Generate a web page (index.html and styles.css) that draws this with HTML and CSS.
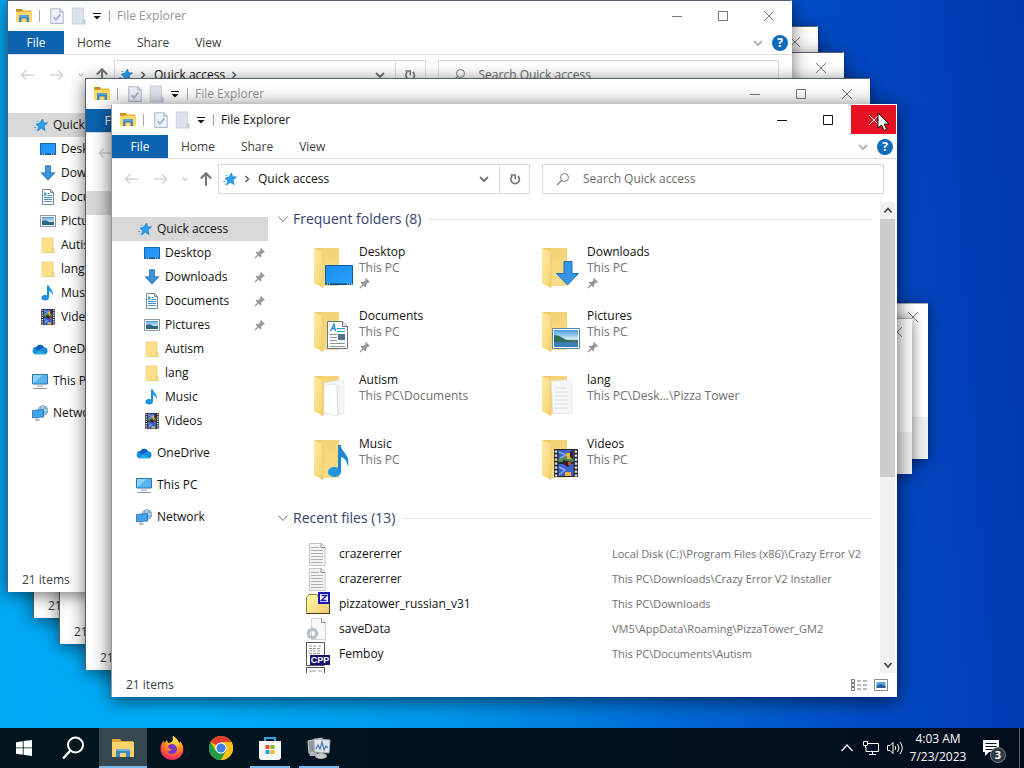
FILE: index.html
```html
<!DOCTYPE html>
<html lang="en">
<head>
<meta charset="utf-8">
<title>File Explorer</title>
<link rel="stylesheet" href="styles.css">
</head>
<body>
<svg class="defs" aria-hidden="true">
  <defs>
    <linearGradient id="gFold" x1="0" x2="1" y1="0" y2="1"><stop offset="0" stop-color="#ffe9a6"/><stop offset="1" stop-color="#f7d56c"/></linearGradient>
    <linearGradient id="gBack" x1="0" x2="0" y1="0" y2="1"><stop offset="0" stop-color="#f5d478"/><stop offset="1" stop-color="#f8dc8c"/></linearGradient>
    <linearGradient id="gBlue" x1="0" x2="1" y1="0" y2="1"><stop offset="0" stop-color="#1a8cf0"/><stop offset="1" stop-color="#2ba2ff"/></linearGradient>
    <linearGradient id="gSky" x1="0" x2="0" y1="0" y2="1"><stop offset="0" stop-color="#4a9ce0"/><stop offset=".55" stop-color="#d5ecf7"/><stop offset=".6" stop-color="#4e7d68"/><stop offset="1" stop-color="#27548a"/></linearGradient>
    <radialGradient id="gFox" cx=".6" cy=".2" r=".9"><stop offset="0" stop-color="#fff04a"/><stop offset=".4" stop-color="#ff9a1f"/><stop offset=".8" stop-color="#ff3750"/><stop offset="1" stop-color="#e0228a"/></radialGradient>
    <linearGradient id="gZip" x1="0" x2="1" y1="0" y2="1"><stop offset="0" stop-color="#ffffa8"/><stop offset="1" stop-color="#f2c46c"/></linearGradient>
    <symbol id="explorer" viewBox="0 0 16 16"><path d="M0 1h6l1 1.500h8.500V14H0z" fill="#e9b93c"/><path d="M0 1h6l1 1.500H6l-1 1H0z" fill="#c98f1c"/><path d="M0 4h16v10H0z" fill="#ffd968"/><path d="M3 7h10v7h-2.500v-3.500h-5V14H3z" fill="#3f88c5"/><path d="M3 7h10v2H3z" fill="#5aa3d8"/></symbol>
    <symbol id="props" viewBox="0 0 16 16"><path d="M2.500 1.500h8l3 3v10h-11z" fill="#eef1f8" stroke="#b3bccd"/><path d="M10.500 1.500v3h3" fill="none" stroke="#b3bccd"/><path d="m5 9 2 2.500L11 6.500" fill="none" stroke="#a9b4d2" stroke-width="1.700"/></symbol>
    <symbol id="newf" viewBox="0 0 16 16"><path d="M2 1h10v10l1.500.5V15H2z" fill="#dde2ec" stroke="#cdd4e2"/><path d="M11 11h2.500v4H11z" fill="#c7cfdd"/></symbol>
    <symbol id="star" viewBox="0 0 16 16"><path d="m9.500 2 1 3.800 4 .2-3.500 2.800 1 4.700-3.700-2.300L4.500 14l1.500-4.300L3 7.300 6.800 6.200z" fill="#2d9fee" stroke="#1c83d6" stroke-width=".8"/><path d="M1 10.500h2.500M2 13h1.500M3.500 4.500h2" stroke="#64b5ee"/></symbol>
    <symbol id="desktop" viewBox="0 0 16 16"><path d="M.5 2.500h15v11H.5z" fill="url(#gBlue)" stroke="#1268b0"/><path d="M1 13h14" stroke="#0b4a86"/><path d="M2 13h1m1 0h1m6 0h1m1 0h1" stroke="#fff"/></symbol>
    <symbol id="down" viewBox="0 0 16 16"><path d="M5.500.8h5v7h4.300L8 15.200 1.200 7.800h4.300z" fill="#3a93dd" stroke="#1d6fb8" stroke-width=".8"/></symbol>
    <symbol id="doc" viewBox="0 0 16 16"><path d="M2.500.5h8l3 3v12h-11z" fill="#fff" stroke="#7c8794"/><path d="M10.500.5v3h3" fill="none" stroke="#7c8794"/><path d="M7.500 4.500h2M7.500 6.500h4.500M4 8.500h8M4 10.500h8M4 12.500h8" stroke="#3d8fc4"/><path d="m4 6.800 1-3.200 1 3.200" fill="none" stroke="#1f83c4"/></symbol>
    <symbol id="pic" viewBox="0 0 16 16"><path d="M.5 2.500h15v11H.5z" fill="#fff" stroke="#8b98a6"/><path d="M2 4h12v8H2z" fill="url(#gSky)"/><path d="M2 8q4-2 7 1t5 1v2H2z" fill="#2e6687"/></symbol>
    <symbol id="folder" viewBox="0 0 16 16"><path d="M2 1h11v9.500l1 .5v4.500H2z" fill="#ffe08a" stroke="#e8c35c" stroke-width=".6"/><path d="M12 11h2v4.500h-2z" fill="#f3cf6c"/></symbol>
    <symbol id="note" viewBox="0 0 16 16"><ellipse cx="5.200" cy="12.700" rx="3.700" ry="2.700" fill="#1c93dc"/><path d="M7 .5h2c.3 3.500 5 4.500 3.700 10C12.300 7.500 10.500 6.500 9 6v6.500H7z" fill="#1c93dc"/></symbol>
    <symbol id="film" viewBox="0 0 24 28"><path d="M0 0h24v28H0z" fill="#26262c"/><path d="M2 1.500v26M22 1.500v26" stroke="#e8e8e8" stroke-width="2.400" stroke-dasharray="2.200 1.800"/><path d="M4.500 1h15v12h-15zM4.500 15h15v12h-15z" fill="#3b62cf"/><path d="M4.500 9l6-3 3 4 6-2v5h-15z" fill="#4d8a52"/><path d="M5 3l7 3-6 3M5 18l6 3-6 5" stroke="#87a8ed" stroke-width="1.500" fill="none"/><path d="M12 4h5v6h-4zM11 23h6v4h-6z" fill="#e9b43b"/><path d="m9 11 9 2-4 5-5-3zM16 3l3-2v9l-3-2z" fill="#3a1d24"/><path d="M14 13h3v3h-3z" fill="#c94a32"/></symbol>
    <symbol id="cloud" viewBox="0 0 16 16"><path d="M4.500 6A4.200 4.200 0 0 1 12 6.200a3.600 3.600 0 0 1 .8 7.100H3.500A3.700 3.700 0 0 1 4.500 6z" fill="#1490df"/><path d="M4.500 6A4.200 4.200 0 0 1 12 6.200L6.500 9.500 2 7.200z" fill="#0f5fb4"/><path d="m6.500 9.500 7.500 3.500-1.200.3H3.500z" fill="#28a8ea"/></symbol>
    <symbol id="pc" viewBox="0 0 16 16"><path d="M.5 1.500h15v9.500H.5z" fill="#57b5ef" stroke="#2c78ae"/><path d="M1 10.500V2h10z" fill="#8fd2f8"/><path d="M5 13h6M1 15.500h14" stroke="#8d98a2"/></symbol>
    <symbol id="net" viewBox="0 0 16 16"><circle cx="11" cy="5.500" r="4.800" fill="#86b9d8" stroke="#5d8fae" stroke-width=".7"/><path d="M7 4q4 2 8 1M10.500 1q-2 5 2 9" stroke="#d5edf8" fill="none"/><path d="m.5 5.500 11-1v7.500l-11 .8z" fill="#3ea5e8" stroke="#276fa8" stroke-width=".8"/><path d="M5 13v1.500M3 15h5" stroke="#7d8b96"/></symbol>
    <symbol id="pin" viewBox="0 0 12 12"><path d="m7 1 4 4-1 .8-.8-.2L7 7.800l.2 2-.9.8L1.500 5.600l.9-.8 2 .2L6.500 3 6.200 2z" fill="#95999e"/><path d="M4.500 7.500 1 11" stroke="#95999e" stroke-width="1.200"/></symbol>
    <symbol id="big" viewBox="0 0 48 48"><path d="M8 4h24v38H14z" fill="url(#gBack)"/><path d="M7 4l9 5v34.500L7 39.500z" fill="url(#gFold)"/><path d="M7 4h9v1.500l-7-.3z" fill="#ecc763"/><path d="M14 38v5l2 .5V9" fill="none" stroke="#e6c268" stroke-width=".7"/></symbol>
    <symbol id="x" viewBox="0 0 12 12"><path d="m1 1 10 10M11 1 1 11" fill="none" stroke="currentColor"/></symbol>
    <symbol id="min" viewBox="0 0 12 12"><path d="M1 6.500h10" stroke="currentColor"/></symbol>
    <symbol id="max" viewBox="0 0 12 12"><path d="M1.500 1.500h9v9h-9z" fill="none" stroke="currentColor"/></symbol>
    <symbol id="vee" viewBox="0 0 12 12"><path d="m1.500 3.500 4.500 5 4.500-5" fill="none" stroke="currentColor"/></symbol>
    <symbol id="chev" viewBox="0 0 12 12"><path d="m2 4 4 4 4-4" fill="none" stroke="currentColor" stroke-width="2"/></symbol>
    <symbol id="crumb" viewBox="0 0 8 8"><path d="m2.500 1 3 3-3 3" fill="none" stroke="currentColor" stroke-width="1.400"/></symbol>
    <symbol id="more" viewBox="0 0 8 8"><path d="M0 1.500h8" stroke="currentColor"/><path d="M.5 4h7L4 7.500z" fill="currentColor"/></symbol>
    <symbol id="left" viewBox="0 0 14 14"><path d="M13 7H2M6 3 2 7l4 4" fill="none" stroke="currentColor" stroke-width="1.300"/></symbol>
    <symbol id="right" viewBox="0 0 14 14"><path d="M1 7h11M8 3l4 4-4 4" fill="none" stroke="currentColor" stroke-width="1.300"/></symbol>
    <symbol id="small" viewBox="0 0 14 14"><path d="m5 6 2 2 2-2" fill="none" stroke="currentColor" stroke-width="1.300"/></symbol>
    <symbol id="up" viewBox="0 0 14 14"><path d="M7 13V2M2.500 6.500 7 2l4.500 4.500" fill="none" stroke="currentColor" stroke-width="1.800"/></symbol>
    <symbol id="refresh" viewBox="0 0 14 14"><path d="M9.800 4A4.300 4.300 0 1 1 4.200 4.200" fill="none" stroke="currentColor" stroke-width="1.700"/><path d="M2.500 3h4.700v4.200" fill="none" stroke="currentColor" stroke-width="1.500"/></symbol>
    <symbol id="lens" viewBox="0 0 14 14"><circle cx="8.500" cy="5.500" r="4" fill="none" stroke="currentColor"/><path d="M5.700 8.300 1 13" stroke="currentColor" stroke-width="1.200"/></symbol>
    <symbol id="txt" viewBox="0 0 24 24"><path d="M3.500 1.500h12l3.500 3.500v18.500H3.500z" fill="#f4f4f4" stroke="#c4c4c4"/><path d="M15 1.500v4h4" fill="none" stroke="#8d8d8d"/><path d="M5 5.500h8M5 8.500h12M5 11.500h12M5 14.500h12M5 17.500h12M5 20.500h12" stroke="#adadad"/></symbol>
  </defs>
</svg>

<div class="desktop">
  <section class="window w2" aria-label="File Explorer">
    <header class="titlebar"><div class="controls"><button aria-label="Close"><svg class="i12"><use href="#x"/></svg></button></div></header>
    <div class="body"></div>
    <footer class="status"><span>21 items</span></footer>
  </section>
  <section class="window w3" aria-label="File Explorer">
    <header class="titlebar"><div class="controls"><button aria-label="Close"><svg class="i12"><use href="#x"/></svg></button></div></header>
    <div class="body"></div>
    <footer class="status"><span>21 items</span></footer>
  </section>

  <section class="window w1" aria-label="File Explorer">
    <header class="titlebar">
      <svg class="app"><use href="#explorer"/></svg><i class="sep"></i>
      <button class="quick" aria-label="Properties"><svg class="i18"><use href="#props"/></svg></button>
      <button class="quick" aria-label="New folder"><svg class="i18"><use href="#newf"/></svg></button>
      <button class="more" aria-label="Customize toolbar"><svg><use href="#more"/></svg></button>
      <i class="sep"></i><span class="title">File Explorer</span>
      <div class="controls">
        <button aria-label="Minimize"><svg class="i12"><use href="#min"/></svg></button>
        <button aria-label="Maximize"><svg class="i12"><use href="#max"/></svg></button>
        <button aria-label="Close"><svg class="i12"><use href="#x"/></svg></button>
      </div>
    </header>
    <nav class="tabs">
      <button class="file">File</button><button>Home</button><button>Share</button><button>View</button>
      <button class="ribbon" aria-label="Expand the ribbon"><svg class="i12"><use href="#chev"/></svg></button>
      <button class="help" aria-label="Help">?</button>
    </nav>
    <div class="navrow">
      <button class="off" aria-label="Back"><svg><use href="#left"/></svg></button>
      <button class="off" aria-label="Forward"><svg><use href="#right"/></svg></button>
      <button class="off tiny" aria-label="Recent locations"><svg><use href="#small"/></svg></button>
      <button class="up" aria-label="Up"><svg><use href="#up"/></svg></button>
      <div class="address">
        <svg class="i16"><use href="#star"/></svg><svg class="crumb"><use href="#crumb"/></svg>
        <span>Quick access</span><svg class="crumb"><use href="#crumb"/></svg>
        <button class="drop" aria-label="Previous locations"><svg class="i12"><use href="#chev"/></svg></button>
        <button class="refresh" aria-label="Refresh"><svg><use href="#refresh"/></svg></button>
      </div>
      <label class="search"><svg><use href="#lens"/></svg><input type="search" placeholder="Search Quick access" aria-label="Search Quick access"></label>
    </div>
    <div class="body">
      <aside class="side">
        <a href="#qa" class="root on"><svg class="i16"><use href="#star"/></svg>Quick access</a>
        <a href="#d"><svg class="i16"><use href="#desktop"/></svg>Desktop</a>
        <a href="#d"><svg class="i16"><use href="#down"/></svg>Downloads</a>
        <a href="#d"><svg class="i16"><use href="#doc"/></svg>Documents</a>
        <a href="#d"><svg class="i16"><use href="#pic"/></svg>Pictures</a>
        <a href="#d"><svg class="i16"><use href="#folder"/></svg>Autism</a>
        <a href="#d"><svg class="i16"><use href="#folder"/></svg>lang</a>
        <a href="#d"><svg class="i16"><use href="#note"/></svg>Music</a>
        <a href="#d"><svg class="i16"><use href="#film"/></svg>Videos</a>
        <a href="#d" class="root gap"><svg class="i16"><use href="#cloud"/></svg>OneDrive</a>
        <a href="#d" class="root gap"><svg class="i16"><use href="#pc"/></svg>This PC</a>
        <a href="#d" class="root gap"><svg class="i16"><use href="#net"/></svg>Network</a>
      </aside>
    </div>
    <footer class="status"><span>21 items</span></footer>
  </section>

  <section class="window w4" aria-label="File Explorer">
    <header class="titlebar">
      <svg class="app"><use href="#explorer"/></svg><i class="sep"></i>
      <button class="quick" aria-label="Properties"><svg class="i18"><use href="#props"/></svg></button>
      <button class="quick" aria-label="New folder"><svg class="i18"><use href="#newf"/></svg></button>
      <button class="more" aria-label="Customize toolbar"><svg><use href="#more"/></svg></button>
      <i class="sep"></i><span class="title">File Explorer</span>
      <div class="controls">
        <button aria-label="Minimize"><svg class="i12"><use href="#min"/></svg></button>
        <button aria-label="Maximize"><svg class="i12"><use href="#max"/></svg></button>
        <button aria-label="Close"><svg class="i12"><use href="#x"/></svg></button>
      </div>
    </header>
    <nav class="tabs"><button class="file">File</button></nav>
    <div class="navrow"><button class="off" aria-label="Back"><svg><use href="#left"/></svg></button></div>
    <div class="body"><aside class="side"><a href="#qa" class="root on" aria-label="Quick access"></a></aside></div>
    <footer class="status"><span>21 items</span></footer>
  </section>

  <section class="dialog dialog-a" aria-label="Message"><svg class="i12"><use href="#x"/></svg><div class="dialog-foot"></div></section>
  <section class="dialog dialog-b" aria-label="Message"><svg class="i12"><use href="#x"/></svg><div class="dialog-foot"></div></section>

  <section class="window front" aria-label="File Explorer">
    <header class="titlebar">
      <svg class="app"><use href="#explorer"/></svg><i class="sep"></i>
      <button class="quick" aria-label="Properties"><svg class="i18"><use href="#props"/></svg></button>
      <button class="quick" aria-label="New folder"><svg class="i18"><use href="#newf"/></svg></button>
      <button class="more" aria-label="Customize toolbar"><svg><use href="#more"/></svg></button>
      <i class="sep"></i><span class="title">File Explorer</span>
      <div class="controls">
        <button aria-label="Minimize"><svg class="i12"><use href="#min"/></svg></button>
        <button aria-label="Maximize"><svg class="i12"><use href="#max"/></svg></button>
        <button class="close" aria-label="Close"><svg class="i12"><use href="#x"/></svg></button>
      </div>
    </header>
    <nav class="tabs">
      <button class="file">File</button><button>Home</button><button>Share</button><button>View</button>
      <button class="ribbon" aria-label="Expand the ribbon"><svg class="i12"><use href="#chev"/></svg></button>
      <button class="help" aria-label="Help">?</button>
    </nav>
    <div class="navrow">
      <button class="off" aria-label="Back"><svg><use href="#left"/></svg></button>
      <button class="off" aria-label="Forward"><svg><use href="#right"/></svg></button>
      <button class="off tiny" aria-label="Recent locations"><svg><use href="#small"/></svg></button>
      <button class="up" aria-label="Up"><svg><use href="#up"/></svg></button>
      <div class="address">
        <svg class="i16"><use href="#star"/></svg><svg class="crumb"><use href="#crumb"/></svg>
        <span>Quick access</span>
        <button class="drop" aria-label="Previous locations"><svg class="i12"><use href="#chev"/></svg></button>
        <button class="refresh" aria-label="Refresh"><svg><use href="#refresh"/></svg></button>
      </div>
      <label class="search"><svg><use href="#lens"/></svg><input type="search" placeholder="Search Quick access" aria-label="Search Quick access"></label>
    </div>
    <div class="body">
      <aside class="side">
        <a href="#qa" class="root on"><svg class="i16"><use href="#star"/></svg>Quick access</a>
        <a href="#d"><svg class="i16"><use href="#desktop"/></svg>Desktop<svg class="pin"><use href="#pin"/></svg></a>
        <a href="#d"><svg class="i16"><use href="#down"/></svg>Downloads<svg class="pin"><use href="#pin"/></svg></a>
        <a href="#d"><svg class="i16"><use href="#doc"/></svg>Documents<svg class="pin"><use href="#pin"/></svg></a>
        <a href="#d"><svg class="i16"><use href="#pic"/></svg>Pictures<svg class="pin"><use href="#pin"/></svg></a>
        <a href="#d"><svg class="i16"><use href="#folder"/></svg>Autism</a>
        <a href="#d"><svg class="i16"><use href="#folder"/></svg>lang</a>
        <a href="#d"><svg class="i16"><use href="#note"/></svg>Music</a>
        <a href="#d"><svg class="i16"><use href="#film"/></svg>Videos</a>
        <a href="#d" class="root gap"><svg class="i16"><use href="#cloud"/></svg>OneDrive</a>
        <a href="#d" class="root gap"><svg class="i16"><use href="#pc"/></svg>This PC</a>
        <a href="#d" class="root gap"><svg class="i16"><use href="#net"/></svg>Network</a>
      </aside>
      <main class="main">
        <h2><svg class="i12"><use href="#vee"/></svg>Frequent folders (8)</h2>
        <div class="tiles">
          <a href="#t" class="tile"><svg class="i48" viewBox="0 0 48 48"><use href="#big"/><path d="M18.500 21.500h27v19h-27z" fill="url(#gBlue)" stroke="#135c9c"/><path d="M19 40h26" stroke="#083f74"/><path d="M20 40h1m1 0h1m17 0h1m1 0h1m1 0h1" stroke="#fff"/></svg><div><b>Desktop</b><span>This PC</span><svg class="pin"><use href="#pin"/></svg></div></a>
          <a href="#t" class="tile"><svg class="i48" viewBox="0 0 48 48"><use href="#big"/><path d="M29 17.500h8v12h6.500L32.500 41 21.500 29.500H29z" fill="#3595e4" stroke="#1d70ba"/></svg><div><b>Downloads</b><span>This PC</span><svg class="pin"><use href="#pin"/></svg></div></a>
          <a href="#t" class="tile"><svg class="i48" viewBox="0 0 48 48"><use href="#big"/><path d="M20.500 13.500h15l5 5v22h-20z" fill="#fff" stroke="#69737c"/><path d="M35.500 13.500v5h5" fill="#e8edf0" stroke="#69737c"/><path d="m23.500 23 3.500-7 1.500 7m-3.500-2.500h3" fill="none" stroke="#1b91cf" stroke-width="1.300"/><path d="M30 20.500h8M30 23.500h8" stroke="#22a0d8"/><path d="M23 26.500h7M23 29.500h7M23 32.500h7M23 35.500h15M23 38.500h15" stroke="#8d969e"/><path d="M31 26h7v6h-7z" fill="#56718c"/></svg><div><b>Documents</b><span>This PC</span><svg class="pin"><use href="#pin"/></svg></div></a>
          <a href="#t" class="tile"><svg class="i48" viewBox="0 0 48 48"><use href="#big"/><path d="M17.500 20.500h27v20h-27z" fill="#fff" stroke="#5c86ac"/><path d="M19 22h24v17H19z" fill="url(#gSky)"/><path d="M19 27q5 0 9 3t15 4v1H19z" fill="#2f6a5a"/><path d="M19 34h24v5H19z" fill="#3d7fb4"/></svg><div><b>Pictures</b><span>This PC</span><svg class="pin"><use href="#pin"/></svg></div></a>
          <a href="#t" class="tile"><svg class="i48" viewBox="0 0 48 48"><use href="#big"/><path d="M17 11l16-3 4 1v33H22z" fill="#f6f6f8" stroke="#e4e4e8" stroke-width=".7"/><path d="M17 14l9-2 6 2v28l-2 2-13-3z" fill="#fff" stroke="#dfe0e5" stroke-width=".7"/><path d="M30 14l1 29" stroke="#d8d9df"/></svg><div><b>Autism</b><span>This PC\Documents</span></div></a>
          <a href="#t" class="tile"><svg class="i48" viewBox="0 0 48 48"><use href="#big"/><path d="M16 9l16-1 5 4v29l-19 1z" fill="#f7f7f8" stroke="#dcdde0" stroke-width=".7"/><path d="M20 16h12M20 20h13M20 24h13M20 28h13M20 32h13M20 36h13" stroke="#d3d5d9" stroke-width=".8"/></svg><div><b>lang</b><span>This PC\Desk...\Pizza Tower</span></div></a>
          <a href="#t" class="tile"><svg class="i48" viewBox="0 0 48 48"><use href="#big"/><ellipse cx="27.500" cy="36" rx="6.500" ry="5" fill="#1e97dd"/><path d="M31 9h3c0 8 10 9 7 22-1-6-3-9-7-10v15h-3z" fill="#1889d2"/></svg><div><b>Music</b><span>This PC</span></div></a>
          <a href="#t" class="tile"><svg class="i48" viewBox="0 0 48 48"><use href="#big"/><use href="#film" x="19" y="13" width="24" height="28"/></svg><div><b>Videos</b><span>This PC</span></div></a>
        </div>
        <h2><svg class="i12"><use href="#vee"/></svg>Recent files (13)</h2>
        <table class="files">
          <tr><td><svg class="i24"><use href="#txt"/></svg></td><td>crazererrer</td><td>Local Disk (C:)\Program Files (x86)\Crazy Error V2</td></tr>
          <tr><td><svg class="i24"><use href="#txt"/></svg></td><td>crazererrer</td><td>This PC\Downloads\Crazy Error V2 Installer</td></tr>
          <tr><td><svg class="i24" viewBox="0 0 24 24"><path d="M.5 5.500 3 2.500h8l2 3h10.500v16H.5z" fill="url(#gZip)" stroke="#8f8431"/><path d="M.5 21.500h23V9" fill="none" stroke="#3e3a16"/><path d="M13 1h10v10H13z" fill="#fff" stroke="#1717b8" stroke-width="2"/><path d="M15.500 3.500h5l-5 5h5" fill="none" stroke="#1717b8" stroke-width="1.500"/></svg></td><td>pizzatower_russian_v31</td><td>This PC\Downloads</td></tr>
          <tr><td><svg class="i24" viewBox="0 0 24 24"><path d="M5.500 1.500h10l4 4v17h-14z" fill="#f7f8f8" stroke="#d0d3d5"/><path d="M15.500 1.500v4h4" fill="none" stroke="#8c8f91"/><circle cx="6.500" cy="16.500" r="4" fill="none" stroke="#b3c3c8" stroke-width="3"/><circle cx="6.500" cy="16.500" r="5.500" fill="none" stroke="#a3b3b8" stroke-dasharray="2 2"/></svg></td><td>saveData</td><td>VM5\AppData\Roaming\PizzaTower_GM2</td></tr>
          <tr><td><svg class="i24" viewBox="0 0 24 24"><path d="M.5.5h18v23H.5z" fill="#fff" stroke="#50545c"/><path d="M3 4h7m2 0h4M3 6.500h12M3 9h6m2 0h4M3 11.500h11" stroke="#9c9c9c" stroke-dasharray="3 1"/><path d="M4 13h20v10H4z" fill="#161670"/><text x="14" y="21" class="cpp">CPP</text></svg></td><td>Femboy</td><td>This PC\Documents\Autism</td></tr>
          <tr><td><svg class="i24" viewBox="0 0 24 24"><path d="M.5.5h18v23H.5z" fill="#fff" stroke="#50545c"/><path d="M3 4h7m2 0h4M3 6.500h12" stroke="#9c9c9c"/></svg></td><td></td><td></td></tr>
        </table>
      </main>
      <div class="scroll">
        <button aria-label="Scroll up"><svg viewBox="0 0 10 10"><path d="m1.500 6.500 3.500-4 3.500 4" fill="none" stroke="currentColor" stroke-width="1.800"/></svg></button>
        <div class="track"><div class="thumb"></div></div>
        <button aria-label="Scroll down"><svg viewBox="0 0 10 10"><path d="m1.500 3 3.500 4 3.500-4" fill="none" stroke="currentColor" stroke-width="1.800"/></svg></button>
      </div>
    </div>
    <footer class="status"><span>21 items</span>
      <button aria-label="Details view"><svg viewBox="0 0 16 14"><path d="M.5 1.500h3v3h-3zM.5 5.500h3v3h-3zM.5 9.500h3v3h-3z" fill="none" stroke="#777"/><path d="M6 3h4m2 0h4M6 7h4m2 0h4M6 11h4m2 0h4" stroke="#777"/></svg></button>
      <button aria-label="Large icons view"><svg viewBox="0 0 16 14"><path d="M1.500 1.500h13v11h-13z" fill="#fff" stroke="#7c8b99"/><path d="M3.500 4h9v6h-9z" fill="#58a4e0"/><path d="m3.500 8 4-2 5 2v2h-9z" fill="#265f92"/></svg></button>
    </footer>
  </section>
  <svg class="cursor" viewBox="0 0 13 20"><path d="M1 1v15l3.500-3 2.600 5.500 2.600-1.200L7.200 12H12z" fill="#fff" stroke="#111"/></svg>
</div>

<footer class="taskbar">
  <button class="start" aria-label="Start"><svg viewBox="0 0 16 16"><path d="m0 2.200 6.800-1v6.300H0zM7.600 1.100 16 0v7.500H7.600zM0 8.300h6.800v6.400L0 13.800zM7.600 8.300H16V16l-8.400-1.200z" fill="#fff"/></svg></button>
  <button aria-label="Search"><svg class="i24" viewBox="0 0 24 24"><circle cx="14.500" cy="9" r="7.500" fill="none" stroke="#fff" stroke-width="2"/><path d="M9.500 14.500 2 22.500" stroke="#fff" stroke-width="2.400"/></svg></button>
  <button class="active" aria-label="File Explorer"><svg class="i24" viewBox="0 0 24 24"><path d="M1 3h8l1.500 2H22v15H1z" fill="#dca63a"/><path d="M1 6h22v15H1z" fill="#fbd36a"/><path d="M5 13h14v8h-4v-4H9v4H5z" fill="#3b8ac0"/><path d="M5 13h14v2H5z" fill="#6ab1dc"/></svg></button>
  <button aria-label="Firefox"><svg class="i24" viewBox="0 0 24 24"><path d="M13 0c3 2 5 4 6 7l1.500-1.500C23 9 24 12 23 16c-1.500 5-6 8-11 8S1 20 .5 14C.3 10 1.500 7 3.500 4.500L4 7l3-3 1 3c2 0 4-1 5-3-.5-1.500-.5-3 0-4z" fill="url(#gFox)"/><path d="M8 10c2-2 5-3 8 0 2 3 1 7-3 8-3 .5-5-1-6-3 2 .5 3.500 0 5-1.500-2 0-4-1-4-3.500z" fill="#7a35c9"/><path d="M13 0c3 2 7 5 6.500 11-.5-2-3-4-5-5-1.500-2-2-4-1.500-6z" fill="#ffd43a"/></svg></button>
  <button aria-label="Chrome"><svg class="i24" viewBox="0 0 24 24"><circle cx="12" cy="12" r="12" fill="#fbc116"/><path d="M12 12 1.600 6A12 12 0 0 1 22.400 6H12z" fill="#e33b2e"/><path d="M1.600 6A12 12 0 0 0 12 24l5.200-9L12 12 6.800 15z" fill="#229a4a"/><path d="M12 24a12 12 0 0 0 10.400-18H12l5.200 9z" fill="#fbc116"/><circle cx="12" cy="12" r="5.600" fill="#fff"/><circle cx="12" cy="12" r="4.500" fill="#3e7fe8"/></svg></button>
  <button class="run" aria-label="Microsoft Store"><svg class="i24" viewBox="0 0 24 24"><path d="M7 6V2h10v4" fill="none" stroke="#2fa6e0" stroke-width="2"/><path d="M1 5h22v16q0 3-3 3H4q-3 0-3-3z" fill="#f5f7f9"/><path d="M7.500 9h4v4h-4z" fill="#e8502c"/><path d="M12.500 9h4v4h-4z" fill="#7db928"/><path d="M7.500 14h4v4h-4z" fill="#2ba0df"/><path d="M12.500 14h4v4h-4z" fill="#f7b51b"/></svg></button>
  <button class="run" aria-label="System monitor"><svg class="i24" viewBox="0 0 24 24"><path d="m1 5 14-3v13L2 17z" fill="#8f9599" stroke="#d3d6d8"/><path d="m7 3 16 1-1 13-14-1z" fill="#dfe7ee" stroke="#aeb4b9"/><path d="m9 13 2-4 2 4 2-7 2 8 2-4 2 2" fill="none" stroke="#4678ae" stroke-width="1.200"/><ellipse cx="14" cy="20" rx="6" ry="3" fill="#c3c7ca"/><path d="M2 17h8v3H3z" fill="#b0b5b9"/></svg></button>
  <div class="tray">
    <button aria-label="Hidden icons"><svg viewBox="0 0 16 16"><path d="m2.500 11 5.500-6 5.500 6" fill="none" stroke="#fff" stroke-width="1.300"/></svg></button>
    <button aria-label="Network"><svg viewBox="0 0 16 16"><path d="M5 3.500h10.500v8H3V7M9.500 12v2.500M6 14.500h7M.5 1.500h4v4h-4zM2.500 6v2" fill="none" stroke="#fff"/></svg></button>
    <button aria-label="Volume"><svg viewBox="0 0 16 16"><path d="M.5 5.500h2.500l3-3v11l-3-3H.5z" fill="none" stroke="#fff"/><path d="M8 6q1.500 2 0 4M10.500 4q3 4 0 8M13 2q4.500 6 0 12" fill="none" stroke="#fff"/></svg></button>
    <button class="clock"><span>4:03 AM</span><span>7/23/2023</span></button>
    <button class="notes" aria-label="Notifications"><svg viewBox="0 0 18 18"><path d="M1 1h16v12H7l-4 4v-4H1z" fill="#fff"/><path d="M3.500 4.500h11M3.500 7.500h11M3.500 10.500h7" stroke="#04101c"/></svg><span>3</span></button>
  </div>
</footer>
</body>
</html>
```

FILE: styles.css
```css
* { box-sizing: border-box; }
html, body { height: 100%; }
body {
  margin: 0; overflow: hidden; display: flex; flex-direction: column;
  font: 12px/16px "Open Sans", "Noto Sans", sans-serif; color: #111;
  background: linear-gradient(86deg, #00a8f4 0%, #00aef9 18%, #0096ea 42%, #006cd8 62%, #004cc6 80%, #0042bc 90%, #0038ae 100%);
}
button { border: 0; padding: 0; margin: 0; background: none; font: inherit; color: inherit; display: flex; align-items: center; justify-content: center; }
a { color: inherit; text-decoration: none; }
svg { display: block; flex: none; }
.defs { position: absolute; width: 0; height: 0; }
.i12 { width: 12px; height: 12px; }
.i16 { width: 16px; height: 16px; }
.i18 { width: 18px; height: 18px; }
.i24 { width: 24px; height: 24px; }
.i48 { width: 48px; height: 48px; }
.pin { width: 12px; height: 12px; }

.desktop { flex: 1; position: relative; min-height: 0; }

.window {
  position: absolute; width: 785px; height: 592px; background: #fff;
  border: 1px solid #55606c; border-bottom: 0; border-right-color: #fff;
  box-shadow: 0 3px 16px rgba(0, 0, 0, .55);
  display: flex; flex-direction: column;
}
.front { left: 111px; top: 104px; width: 786px; height: 593px; border-color: #fff #fff #fff #999; box-shadow: 0 3px 18px rgba(0, 0, 0, .65); }
.w1 { left: 7px; top: 0; }
.w2 { left: 33px; top: 26px; }
.w3 { left: 59px; top: 52px; }
.w4 { left: 85px; top: 78px; }

.titlebar { display: flex; align-items: center; height: 29px; padding-left: 8px; flex: none; }
.app { width: 16px; height: 16px; }
.sep { width: 1px; height: 12px; background: #a6a6a6; margin: 0 6px 0 7px; }
.quick { width: 22px; }
.more { width: 14px; }
.more svg { width: 8px; height: 8px; }
.more + .sep { margin: 0 7px 0 5px; }
.controls { margin-left: auto; display: flex; gap: 1px; align-self: stretch; }
.controls button { width: 45px; }
.close { background: #e81123; color: #fff; }
.title { color: #949494; }
.controls { color: #777; }
.front .title, .front .controls { color: #111; }
.front .close { color: #fff; }

.tabs { display: flex; height: 25px; flex: none; border-bottom: 1px solid #dcdddf; padding-top: 1px; color: #3c3c3c; }
.tabs button { padding: 0 13px; }
.tabs .file { width: 56px; background: #0b63b0; color: #fff; }
.tabs .ribbon { margin-left: auto; padding: 0 8px 0 0; color: #b5b5b5; }
.tabs .help { width: 16px; height: 16px; padding: 0; margin: 4px 3px 0 0; border-radius: 8px; background: #0f6bbf; color: #fff; font-weight: bold; }

.navrow { display: flex; align-items: center; height: 43px; padding: 0 12px 3px 4px; flex: none; }
.navrow > button { width: 30px; color: #555; }
.navrow > button svg { width: 16px; height: 16px; }
.navrow > .off { color: #d2d2d2; }
.navrow > .tiny { width: 18px; }
.navrow > .up { width: 24px; color: #777; }
.address { flex: 307; display: flex; align-items: center; height: 30px; border: 1px solid #d9d9d9; padding-left: 3px; }
.crumb { width: 8px; height: 8px; color: #555; margin: 0 7px 0 5px; }
.drop { margin-left: auto; width: 30px; color: #777; }
.refresh { width: 30px; height: 28px; border-left: 1px solid #d9d9d9; color: #777; }
.refresh svg { width: 14px; height: 14px; }
.search { flex: 327; display: flex; align-items: center; height: 30px; margin-left: 12px; border: 1px solid #d9d9d9; padding-left: 13px; color: #777; }
.search svg { width: 14px; height: 14px; }
.search input { flex: 1; min-width: 0; border: 0; outline: 0; background: none; font: inherit; padding: 0 0 0 13px; }
.search input::placeholder { color: #6b6b6b; opacity: 1; }

.body { flex: 1; min-height: 0; display: flex; }
.side { width: 156px; flex: none; padding-top: 15px; display: flex; flex-direction: column; }
.side a { display: flex; align-items: center; gap: 5px; height: 24px; flex: none; padding: 0 2px 0 32px; }
.side .root { padding-left: 24px; }
.side .on { background: #d9d9d9; padding-left: 25px; gap: 4px; }
.side .gap { margin-top: 8px; }
.side .pin { margin-left: auto; }
.main { flex: 1; min-width: 0; overflow: hidden; padding: 6px 8px 0 9px; }
.main h2 { display: flex; align-items: center; gap: 4px; margin: 0; height: 22px; font-size: 14px; line-height: 22px; font-weight: normal; color: #33426e; }
.main h2::after { content: ""; flex: 1; height: 1px; background: #e2e2e4; margin-left: 4px; }
.main h2 svg { color: #777; }
.tiles { display: grid; grid-template-columns: 228px 1fr; grid-auto-rows: 64px; padding: 14px 0 7px 30px; }
.tile { display: flex; gap: 4px; }
.tile b, .tile span { display: block; font-weight: normal; }
.tile span { color: #707070; }
.tile .pin { margin-top: 1px; }
.files { width: 100%; margin-top: 12px; border-collapse: collapse; table-layout: fixed; }
.files td { height: 25px; padding: 0; white-space: nowrap; }
.files td:nth-child(1) { width: 62px; padding-left: 29px; }
.files td:nth-child(2) { width: 273px; }
.files td:nth-child(3) { color: #707070; font-size: 11px; }
.cpp { font: bold 9px "Liberation Sans", sans-serif; fill: #fff; text-anchor: middle; }

.scroll { width: 15px; margin-right: 1px; display: flex; flex-direction: column; background: #f1f1f1; color: #444; }
.scroll button { height: 17px; }
.scroll svg { width: 10px; height: 10px; }
.track { flex: 1; }
.thumb { height: 59%; background: #cdcdcd; }
.status { display: flex; align-items: center; height: 24px; flex: none; padding: 0 7px 0 14px; color: #333e4a; gap: 6px; }
.status span { margin-right: auto; }
.status svg { width: 16px; height: 14px; }

.dialog { position: absolute; width: 360px; height: 156px; background: #fff; color: #777; display: flex; flex-direction: column; justify-content: space-between; align-items: flex-end; box-shadow: 0 2px 12px rgba(0, 0, 0, .5); border-top: 1px solid #aaa; }
.dialog > svg { margin: 7px 9px 0 0; }
.dialog-foot { width: 100%; height: 42px; background: #f0f0f0; }
.dialog-a { left: 568px; top: 303px; }
.dialog-b { left: 552px; top: 318px; }
.cursor { position: absolute; left: 877px; top: 112px; width: 13px; height: 20px; }

.taskbar { position: relative; display: flex; height: 40px; flex: none; background: linear-gradient(90deg, #02161f, #021320 50%, #030d1e); color: #fff; }
.taskbar > button { width: 49px; }
.taskbar > .start { width: 48px; }
.start svg { width: 16px; height: 16px; }
.run { background: linear-gradient(#76b9ed, #76b9ed) center bottom / 40px 2px no-repeat; }
.taskbar > .active { width: 48px; margin-left: 2px; background: linear-gradient(#76b9ed, #76b9ed) center bottom / 100% 2px no-repeat #36474f; }
.tray { margin-left: auto; display: flex; padding-right: 4px; }
.tray button { width: 24px; }
.tray svg { width: 16px; height: 16px; }
.tray .clock { width: 62px; flex-direction: column; line-height: 18px; }
.tray .notes { width: 51px; border-right: 1px solid #56606c; padding-right: 6px; position: relative; }
.notes svg { width: 18px; height: 18px; }
.notes span { position: absolute; left: 21px; top: 19px; width: 16px; height: 16px; border-radius: 8px; background: #2f3942; border: 1px solid #77818a; line-height: 14px; font-size: 11px; font-weight: bold; }
```
